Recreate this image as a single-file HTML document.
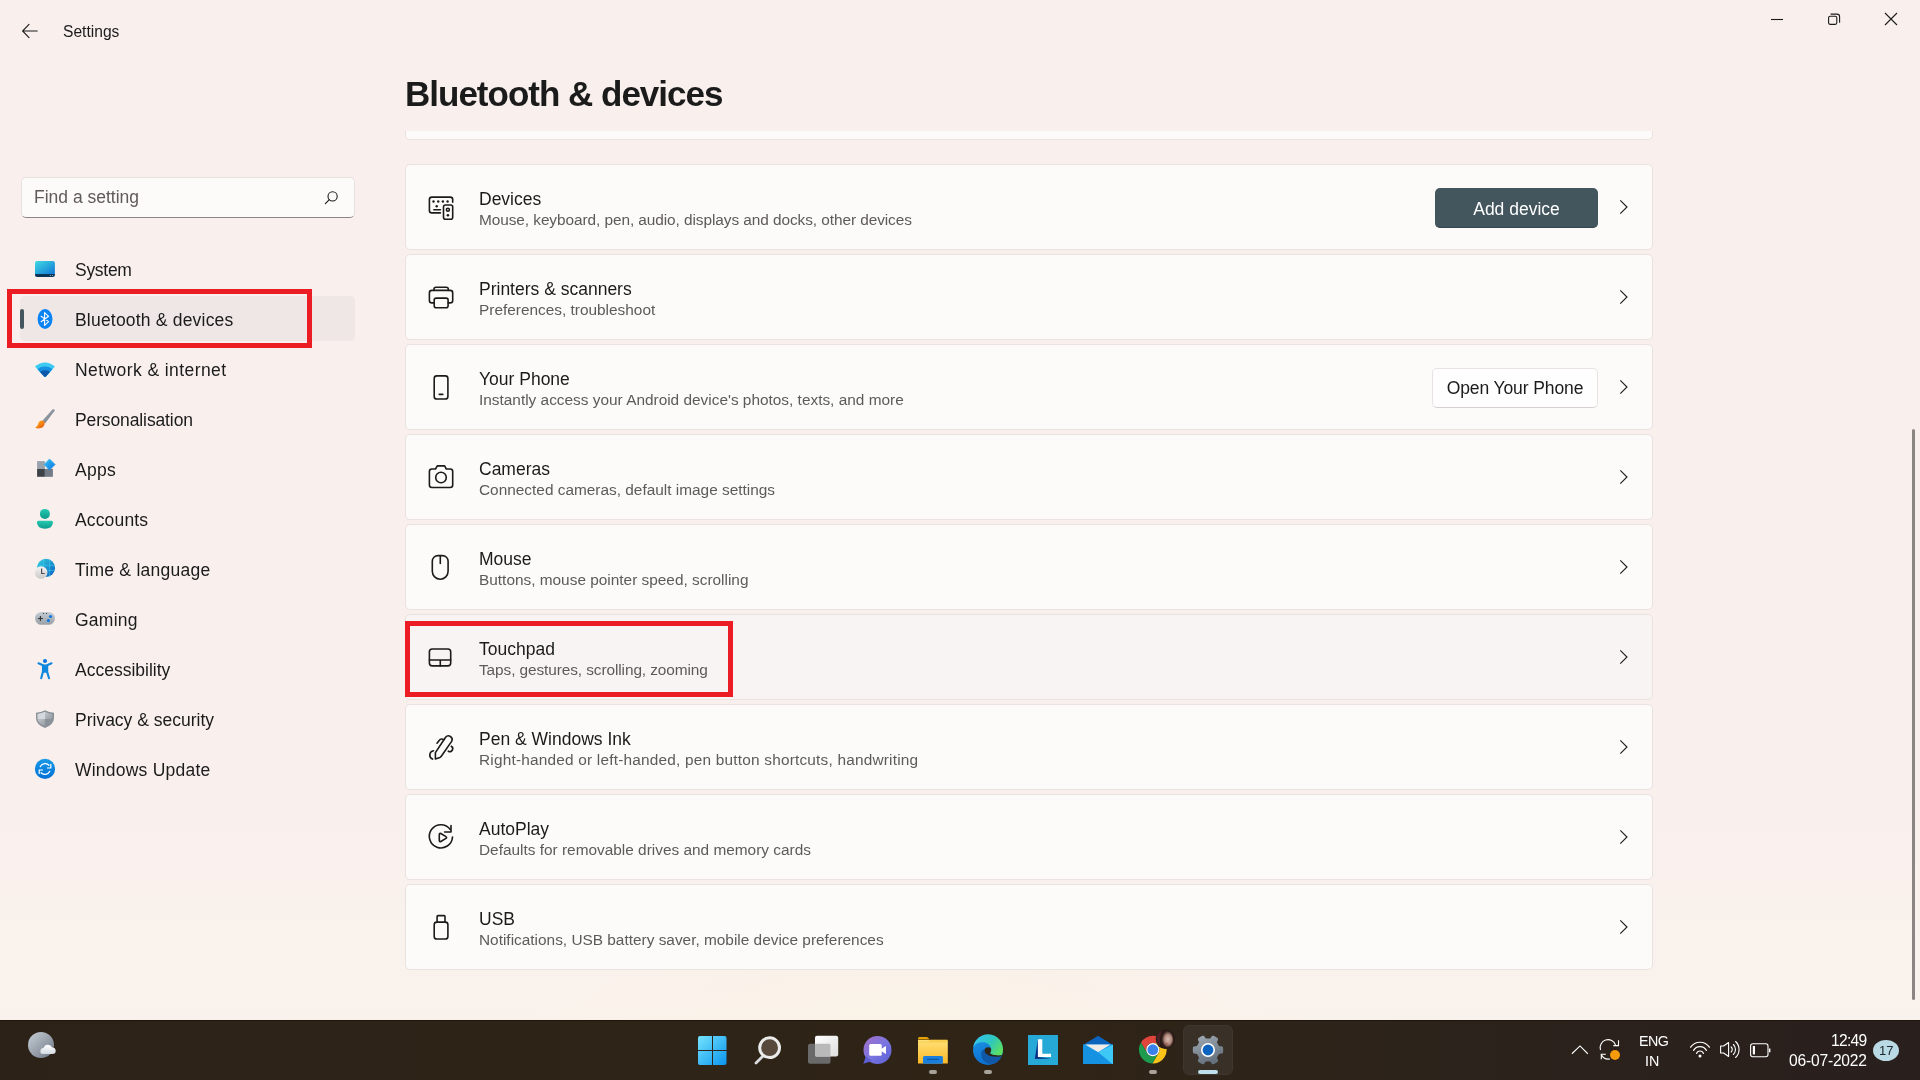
<!DOCTYPE html>
<html><head><meta charset="utf-8">
<style>
*{margin:0;padding:0;box-sizing:border-box}
.t,.card .ti,.card .su,.btnp,.btns{will-change:transform}
html,body{width:1920px;height:1080px;overflow:hidden}
body{background:radial-gradient(ellipse 420px 160px at 900px 1030px,rgba(250,243,228,0.6),rgba(250,243,228,0) 100%),linear-gradient(180deg,#f9f0ee 0px,#f9f0ed 800px,#f9f2ec 1020px);font-family:"Liberation Sans",sans-serif;color:#1b1b1b;position:relative}
.a{position:absolute}
.t{position:absolute;white-space:nowrap;line-height:1}
.nav{font-size:17.5px;left:75px;color:#1b1b1b}
.card{position:absolute;left:405px;width:1248px;height:86px;background:#fcfbf9;border:1px solid #eae2e0;border-radius:5px}
.card .ti{position:absolute;left:73px;top:25.6px;font-size:17.5px;line-height:1;white-space:nowrap;color:#1b1b1b}
.card .su{position:absolute;left:73px;top:47.2px;font-size:15.4px;line-height:1;white-space:nowrap;color:#5d5b5a}
.card svg.ic{position:absolute;left:14px;top:20px;width:40px;height:45px}
.card svg.ch{position:absolute;left:1205px;top:34px;width:20px;height:20px}
.ic *{fill:none;stroke:#1b1b1b;stroke-width:1.6;stroke-linecap:round;stroke-linejoin:round}
.ic .f{fill:#1b1b1b;stroke:none}
.nv{position:absolute;left:28px;width:35px;height:35px}
.btnp{position:absolute;left:1029px;top:23px;width:163px;height:40px;background:#44565d;border-bottom:1px solid #34444a;border-radius:5px;color:#fff;font-size:17.5px;line-height:42.5px;text-align:center}
.btns{position:absolute;left:1026px;top:23px;width:166px;height:40px;background:#fefefe;border:1px solid #e8e3e2;border-bottom-color:#d5d0cf;border-radius:5px;color:#1b1b1b;font-size:17.5px;line-height:39.5px;text-align:center;letter-spacing:-0.1px}
</style></head>
<body>
<!-- title bar -->
<svg class="a" style="left:20px;top:22px" width="20" height="18" viewBox="0 0 20 18"><path d="M9 2.3 L2.6 9 L9 15.7 M2.8 9 H17.2" fill="none" stroke="#1b1b1b" stroke-width="1.1" stroke-linecap="round"/></svg>
<div class="t" style="left:62.5px;top:24px;font-size:15.6px">Settings</div>

<svg class="a" style="left:1765px;top:10px" width="24" height="20"><path d="M6 9.5 H18" stroke="#1b1b1b" stroke-width="1.1"/></svg>
<svg class="a" style="left:1822px;top:8.5px" width="24" height="22" viewBox="0 0 24 22"><rect x="6.6" y="7.2" width="8.2" height="8.2" rx="1.6" fill="none" stroke="#1b1b1b" stroke-width="1.1"/><path d="M8.6 5.1 H15 a2.6 2.6 0 0 1 2.6 2.6 V13.7" fill="none" stroke="#1b1b1b" stroke-width="1.1"/></svg>
<svg class="a" style="left:1878px;top:6px" width="26" height="26" viewBox="0 0 26 26"><path d="M7 7 L19 19 M19 7 L7 19" stroke="#1b1b1b" stroke-width="1.1"/></svg>

<!-- page title -->
<div class="t" style="left:405px;top:76px;font-size:35px;font-weight:bold;letter-spacing:-1.0px">Bluetooth &amp; devices</div>

<!-- search -->
<div class="a" style="left:21px;top:177px;width:334px;height:41px;background:#fcfbf9;border:1px solid #e6e0de;border-bottom:1px solid #8b8685;border-radius:5px"></div>
<div class="t" style="left:34px;top:189px;font-size:17.5px;color:#5f5b5a">Find a setting</div>
<svg class="a" style="left:322px;top:188px" width="20" height="20" viewBox="0 0 20 20"><circle cx="10.6" cy="8.4" r="4.6" fill="none" stroke="#1b1b1b" stroke-width="1.1"/><path d="M7.3 11.7 L3.4 15.6" stroke="#1b1b1b" stroke-width="1.2" stroke-linecap="round"/></svg>

<!-- nav selection -->
<div class="a" style="left:20px;top:296px;width:335px;height:45px;background:#efe7e5;border-radius:5px"></div>
<div class="a" style="left:20px;top:309px;width:4px;height:20px;background:#45575e;border-radius:2px"></div>

<div id="navtext">
<div class="t nav" style="top:262px;letter-spacing:-0.28px">System</div>
<div class="t nav" style="top:312px;letter-spacing:0.2px">Bluetooth &amp; devices</div>
<div class="t nav" style="top:362px;letter-spacing:0.42px">Network &amp; internet</div>
<div class="t nav" style="top:412px;letter-spacing:-0.12px">Personalisation</div>
<div class="t nav" style="top:462px;letter-spacing:0.3px">Apps</div>
<div class="t nav" style="top:512px;letter-spacing:0.15px">Accounts</div>
<div class="t nav" style="top:562px;letter-spacing:0.25px">Time &amp; language</div>
<div class="t nav" style="top:612px;letter-spacing:0.25px">Gaming</div>
<div class="t nav" style="top:662px">Accessibility</div>
<div class="t nav" style="top:712px">Privacy &amp; security</div>
<div class="t nav" style="top:762px;letter-spacing:0.23px">Windows Update</div>
</div>

<svg class="nv" style="top:252px" viewBox="0 0 35 35">
<defs><linearGradient id="gsys" x1="0" y1="0" x2="1" y2="1"><stop offset="0" stop-color="#3fdbe3"/><stop offset="1" stop-color="#1377d6"/></linearGradient></defs>
<path d="M7 11 a2 2 0 0 1 2 -2 H24.9 a2 2 0 0 1 2 2 V22 H7 Z" fill="url(#gsys)"/>
<path d="M7 22 H26.9 V23 a2 2 0 0 1 -2 2 H9 a2 2 0 0 1 -2 -2 Z" fill="#0b3557"/>
<circle cx="22.4" cy="23.5" r="0.6" fill="#9bb"/><circle cx="24.5" cy="23.5" r="0.6" fill="#9bb"/>
</svg>
<svg class="nv" style="top:302px" viewBox="0 0 35 35">
<ellipse cx="17.05" cy="16.95" rx="7.45" ry="9.95" fill="#0a84f5"/>
<path d="M13.1 14.3 L20.6 19.6 L16.6 23.3 V10.6 L20.6 14.3 L13.1 19.7" fill="none" stroke="#fff" stroke-width="1.1" stroke-linejoin="round" stroke-linecap="round"/>
</svg>
<svg class="nv" style="top:352px" viewBox="0 0 35 35">
<defs><clipPath id="cw"><path d="M7 14.5 Q17 6.5 26.9 14.5 L17.9 24.6 Q17 25.4 16.1 24.6 Z"/></clipPath></defs>
<g clip-path="url(#cw)"><rect x="0" y="0" width="35" height="35" fill="#3cc9f2"/><circle cx="17" cy="26" r="11.6" fill="#1590e0"/><circle cx="17" cy="26" r="7.8" fill="#0b58aa"/></g>
</svg>
<svg class="nv" style="top:402px" viewBox="0 0 35 35">
<defs><linearGradient id="gbr" x1="0" y1="0" x2="1" y2="1"><stop offset="0" stop-color="#b3bcc6"/><stop offset="1" stop-color="#5e6a75"/></linearGradient>
<linearGradient id="gbo" x1="0" y1="0" x2="1" y2="1"><stop offset="0" stop-color="#ffc21a"/><stop offset="1" stop-color="#e64a0e"/></linearGradient></defs>
<path d="M24.4 7.6 Q26.5 6.4 26.8 8.4 L17.2 21.3 L13.9 19.2 Z" fill="url(#gbr)"/>
<path d="M12.6 18.8 Q15.4 17.8 16.8 20.8 Q16.6 26.4 10.2 26.6 Q8.2 26.6 7.2 25.6 Q9.8 24.6 10.2 21.8 Q10.6 19.4 12.6 18.8 Z" fill="url(#gbo)"/>
</svg>
<svg class="nv" style="top:452px" viewBox="0 0 35 35">
<defs><linearGradient id="gap" x1="0" y1="0" x2="1" y2="1"><stop offset="0" stop-color="#35c5f5"/><stop offset="1" stop-color="#0a72e0"/></linearGradient></defs>
<rect x="9.1" y="9.1" width="7.8" height="7.8" fill="#9aa2ab"/>
<rect x="9.1" y="16.9" width="7.8" height="7.9" fill="#3d4247"/>
<rect x="16.9" y="16.9" width="8" height="7.9" fill="#737b84"/>
<path d="M21.5 7 L27 12.5 L21.5 18 L16.2 12.5 Z" fill="url(#gap)" stroke="url(#gap)" stroke-width="0.8" stroke-linejoin="round"/>
</svg>
<svg class="nv" style="top:502px" viewBox="0 0 35 35">
<defs><linearGradient id="gac" x1="0" y1="0" x2="0" y2="1"><stop offset="0" stop-color="#27c9b3"/><stop offset="1" stop-color="#0b9c8a"/></linearGradient></defs>
<circle cx="16.9" cy="11.9" r="5" fill="url(#gac)"/>
<path d="M10.4 18.8 H23.5 Q25 18.8 25 20.6 Q24.4 26.8 17 26.8 Q9.6 26.8 8.9 20.6 Q8.9 18.8 10.4 18.8 Z" fill="url(#gac)"/>
</svg>
<svg class="nv" style="top:552px" viewBox="0 0 35 35">
<defs><linearGradient id="ggl" x1="0" y1="0" x2="1" y2="1"><stop offset="0" stop-color="#35d0e0"/><stop offset="1" stop-color="#0a5cc0"/></linearGradient>
<linearGradient id="gcl" x1="0" y1="0" x2="0" y2="1"><stop offset="0" stop-color="#f5f5f5"/><stop offset="1" stop-color="#c8c8c8"/></linearGradient></defs>
<circle cx="18" cy="15.9" r="9.1" fill="url(#ggl)"/>
<path d="M9 13.4 H27 M9 18.4 H27 M15.5 7 V25 M21.5 7 V25" stroke="#3fd4ef" stroke-width="0.7" opacity="0.7"/>
<circle cx="13.1" cy="20.5" r="6.3" fill="url(#gcl)"/>
<path d="M13.6 16.4 V21.5 H16.8" fill="none" stroke="#505050" stroke-width="1.2"/>
</svg>
<svg class="nv" style="top:602px" viewBox="0 0 35 35">
<defs><linearGradient id="ggm" x1="0" y1="0" x2="0" y2="1"><stop offset="0" stop-color="#c6ccd3"/><stop offset="1" stop-color="#98a0a8"/></linearGradient></defs>
<rect x="7" y="10" width="19.9" height="12.8" rx="6.4" fill="url(#ggm)"/>
<path d="M12.4 14 V19 M9.9 16.5 H14.9" stroke="#333" stroke-width="1.1"/>
<circle cx="22.5" cy="14.5" r="1.6" fill="#0a78e0"/><circle cx="20.4" cy="18.5" r="1.6" fill="#0a78e0"/>
<circle cx="15.5" cy="11.5" r="0.6" fill="#333"/><circle cx="18.5" cy="11.5" r="0.6" fill="#333"/>
</svg>
<svg class="nv" style="top:652px" viewBox="0 0 35 35">
<circle cx="17" cy="9" r="2.1" fill="#0a78dd"/>
<path d="M10.5 11.3 L15 13.2 V19.6 L13.2 26.3 M23.5 11.3 L19.1 13.2 V19.6 L21 26.3" fill="none" stroke="#1088de" stroke-width="2.1" stroke-linecap="round" stroke-linejoin="round"/>
<rect x="14" y="12.6" width="6.1" height="8.2" rx="1" fill="#1088de"/>
</svg>
<svg class="nv" style="top:702px" viewBox="0 0 35 35">
<defs><linearGradient id="gsh" x1="0" y1="0" x2="1" y2="1"><stop offset="0" stop-color="#d6dadf"/><stop offset="1" stop-color="#80878f"/></linearGradient></defs>
<path d="M17 8.2 Q21 10.4 26 10.7 V16 Q26 22.6 17 25.9 Q8 22.6 8 16 V10.7 Q13 10.4 17 8.2 Z" fill="#8a9097"/>
<path d="M17 9.8 Q20.6 11.8 24.4 12 V16 Q24.4 21.4 17 24 Q9.6 21.4 9.6 16 V12 Q13.4 11.8 17 9.8 Z" fill="url(#gsh)"/>
<path d="M17 9.8 V17 H9.6 V12 Q13.4 11.8 17 9.8 Z" fill="#d4d8dc"/>
<path d="M17 17 H24.4 Q24.4 21.4 17 24 Z" fill="#8a9199"/>
</svg>
<svg class="nv" style="top:752px" viewBox="0 0 35 35">
<defs><linearGradient id="gwu" x1="0" y1="0" x2="0" y2="1"><stop offset="0" stop-color="#1a9ae6"/><stop offset="1" stop-color="#0070d8"/></linearGradient></defs>
<circle cx="17" cy="16.9" r="10.1" fill="url(#gwu)"/>
<path d="M12 15 A5.6 5.6 0 0 1 21.3 13.5 M22 19 A5.6 5.6 0 0 1 12.7 20.5" fill="none" stroke="#fff" stroke-width="1.2"/>
<path d="M22.8 12 V16 H19" fill="none" stroke="#fff" stroke-width="1.2"/>
<path d="M11.2 21.9 V18 H15" fill="none" stroke="#fff" stroke-width="1.2"/>
</svg>


<!-- top partial card -->
<div class="a" style="left:405px;top:131px;width:1248px;height:9px;background:#fcfbf9;border:1px solid #eae2e0;border-top:0;border-radius:0 0 5px 5px"></div>

<div class="card" style="top:164px;"><svg class="ic" viewBox="0 0 40 45"><path d="M32.7 17.3 V14.6 a2.5 2.5 0 0 0 -2.5 -2.5 H11.9 a2.5 2.5 0 0 0 -2.5 2.5 V25.4 a2.5 2.5 0 0 0 2.5 2.5 H20.4"/>
<path d="M13.8 24.8 H20.4"/>
<rect x="23.5" y="20" width="9.2" height="14.2" rx="2"/>
<circle cx="27.9" cy="24.8" r="1.5"/>
<circle class="f" cx="13.5" cy="16.5" r="1.2"/><circle class="f" cx="18.25" cy="16.5" r="1.2"/><circle class="f" cx="22.9" cy="16.5" r="1.2"/><circle class="f" cx="27.6" cy="16.5" r="1.2"/><circle class="f" cx="16.7" cy="21.25" r="1.2"/><circle class="f" cx="27.9" cy="30.2" r="1.3"/></svg><div class="ti">Devices</div><div class="su" style="letter-spacing:-0.07px">Mouse, keyboard, pen, audio, displays and docks, other devices</div><div class="btnp">Add device</div><svg class="ch" viewBox="0 0 20 20"><path d="M9.3 1.3 L16 8 L9.3 14.7" fill="none" stroke="#1b1b1b" stroke-width="1.1"/></svg></div>
<div class="card" style="top:254px;"><svg class="ic" viewBox="0 0 40 45"><path d="M14 15.4 V14.2 a2 2 0 0 1 2 -2 H26.3 a2 2 0 0 1 2 2 V15.4"/>
<path d="M14.2 27.9 H11.9 a2.5 2.5 0 0 1 -2.5 -2.5 V17.9 a2.5 2.5 0 0 1 2.5 -2.5 H30.2 a2.5 2.5 0 0 1 2.5 2.5 V25.4 a2.5 2.5 0 0 1 -2.5 2.5 H28.1"/>
<rect x="14.2" y="23.1" width="13.9" height="9.6" rx="2"/></svg><div class="ti">Printers &amp; scanners</div><div class="su">Preferences, troubleshoot</div><svg class="ch" viewBox="0 0 20 20"><path d="M9.3 1.3 L16 8 L9.3 14.7" fill="none" stroke="#1b1b1b" stroke-width="1.1"/></svg></div>
<div class="card" style="top:344px;"><svg class="ic" viewBox="0 0 40 45"><rect x="14.2" y="10.9" width="13.7" height="23.1" rx="2.6"/>
<path d="M19.3 29.4 H22.8"/></svg><div class="ti">Your Phone</div><div class="su">Instantly access your Android device's photos, texts, and more</div><div class="btns">Open Your Phone</div><svg class="ch" viewBox="0 0 20 20"><path d="M9.3 1.3 L16 8 L9.3 14.7" fill="none" stroke="#1b1b1b" stroke-width="1.1"/></svg></div>
<div class="card" style="top:434px;"><svg class="ic" viewBox="0 0 40 45"><path d="M9.4 16.5 a2.5 2.5 0 0 1 2.5 -2.5 H15.5 L17.3 10.9 H24.6 L26.3 14 H30.2 a2.5 2.5 0 0 1 2.5 2.5 V30 a2.5 2.5 0 0 1 -2.5 2.5 H11.9 a2.5 2.5 0 0 1 -2.5 -2.5 Z"/>
<circle cx="21" cy="22.5" r="5.3"/></svg><div class="ti">Cameras</div><div class="su">Connected cameras, default image settings</div><svg class="ch" viewBox="0 0 20 20"><path d="M9.3 1.3 L16 8 L9.3 14.7" fill="none" stroke="#1b1b1b" stroke-width="1.1"/></svg></div>
<div class="card" style="top:524px;"><svg class="ic" viewBox="0 0 40 45"><path d="M12.3 16.2 a5.6 5.6 0 0 1 5.6 -5.6 H22.5 a5.6 5.6 0 0 1 5.6 5.6 V26.3 a7.9 7.9 0 0 1 -15.8 0 Z"/>
<path d="M20.3 10.8 V18.5"/></svg><div class="ti">Mouse</div><div class="su">Buttons, mouse pointer speed, scrolling</div><svg class="ch" viewBox="0 0 20 20"><path d="M9.3 1.3 L16 8 L9.3 14.7" fill="none" stroke="#1b1b1b" stroke-width="1.1"/></svg></div>
<div class="card" style="top:614px;background:#f8f4f3;"><svg class="ic" viewBox="0 0 40 45"><rect x="9.4" y="14" width="21.3" height="16.9" rx="2.8"/>
<path d="M9.4 25 H30.7 M20.3 25 V30.9"/></svg><div class="ti">Touchpad</div><div class="su" style="letter-spacing:-0.09px">Taps, gestures, scrolling, zooming</div><svg class="ch" viewBox="0 0 20 20"><path d="M9.3 1.3 L16 8 L9.3 14.7" fill="none" stroke="#1b1b1b" stroke-width="1.1"/></svg></div>
<div class="card" style="top:704px;"><svg class="ic" viewBox="0 0 40 45"><path d="M15.4 34 V27.6 L25.6 12.2 a3.7 3.7 0 0 1 6.2 3.9 L21.3 31.3 a3 3 0 0 1 -1.4 1.1 Z"/>
<path d="M17 18.2 L19.4 15.2 a2.7 2.7 0 0 1 4.3 -0.3"/>
<path d="M13.5 25.7 a4.4 4.4 0 0 0 -1 8.4"/>
<path d="M31.3 21.3 a2.6 2.6 0 0 1 -3 4.9"/></svg><div class="ti">Pen &amp; Windows Ink</div><div class="su" style="letter-spacing:0.2px">Right-handed or left-handed, pen button shortcuts, handwriting</div><svg class="ch" viewBox="0 0 20 20"><path d="M9.3 1.3 L16 8 L9.3 14.7" fill="none" stroke="#1b1b1b" stroke-width="1.1"/></svg></div>
<div class="card" style="top:794px;"><svg class="ic" viewBox="0 0 40 45"><path d="M32.5 22 A11.6 11.6 0 1 1 30.3 14.5"/>
<path d="M31 10.6 V17 H24.6"/>
<path d="M19.3 19.4 a1 1 0 0 1 1.5 -0.9 L26 21.6 a1 1 0 0 1 0 1.8 L20.8 26.5 a1 1 0 0 1 -1.5 -0.9 Z"/></svg><div class="ti">AutoPlay</div><div class="su">Defaults for removable drives and memory cards</div><svg class="ch" viewBox="0 0 20 20"><path d="M9.3 1.3 L16 8 L9.3 14.7" fill="none" stroke="#1b1b1b" stroke-width="1.1"/></svg></div>
<div class="card" style="top:884px;"><svg class="ic" viewBox="0 0 40 45"><path d="M17.1 17.1 V11.4 a0.8 0.8 0 0 1 0.8 -0.8 H24.2 a0.8 0.8 0 0 1 0.8 0.8 V17.1"/>
<rect x="14.2" y="17.1" width="13.7" height="16.9" rx="2.6"/></svg><div class="ti">USB</div><div class="su">Notifications, USB battery saver, mobile device preferences</div><svg class="ch" viewBox="0 0 20 20"><path d="M9.3 1.3 L16 8 L9.3 14.7" fill="none" stroke="#1b1b1b" stroke-width="1.1"/></svg></div>

<!-- red boxes -->
<div class="a" style="left:7px;top:289px;width:305px;height:59px;border:5px solid #ec1c24"></div>
<div class="a" style="left:405px;top:621px;width:328px;height:76px;border:5px solid #ec1c24"></div>

<!-- scrollbar -->
<div class="a" style="left:1912px;top:429px;width:3px;height:571px;background:#8a8483;border-radius:2px"></div>

<div class="a" style="left:0;top:1020px;width:1920px;height:60px;background:linear-gradient(90deg,#2d2218 0%,#2e2417 35%,#2f2416 55%,#2b221c 80%,#29201e 100%);border-top:1px solid #1f160b"></div>
<!-- weather -->
<svg class="a" style="left:20px;top:1025px" width="45" height="40" viewBox="0 0 45 40">
<defs><linearGradient id="gwe" x1="0" y1="0" x2="1" y2="1"><stop offset="0" stop-color="#c9d0d8"/><stop offset="1" stop-color="#6c7683"/></linearGradient>
<linearGradient id="gcd" x1="0" y1="0" x2="0" y2="1"><stop offset="0" stop-color="#ffffff"/><stop offset="1" stop-color="#d5dbe2"/></linearGradient></defs>
<circle cx="21" cy="20" r="13" fill="url(#gwe)"/>
<path d="M22 29 a3.2 3.2 0 0 1 1.5 -6 a4.6 4.6 0 0 1 8.6 -0.6 a3.3 3.3 0 0 1 3.6 3.4 a3.2 3.2 0 0 1 -3.2 3.2 Z" fill="url(#gcd)"/>
</svg>
<!-- start -->
<svg class="a" style="left:697px;top:1035px" width="31" height="31" viewBox="0 0 31 31">
<defs><linearGradient id="gst" x1="0" y1="0" x2="1" y2="1"><stop offset="0" stop-color="#74e3fc"/><stop offset="1" stop-color="#0b95f0"/></linearGradient></defs>
<path d="M1 3 a2 2 0 0 1 2 -2 H15 V15 H1 Z M16 1 H27.5 a2 2 0 0 1 2 2 V15 H16 Z M1 16 H15 V30 H3 a2 2 0 0 1 -2 -2 Z M16 16 H29.5 V28 a2 2 0 0 1 -2 2 H16 Z" fill="url(#gst)"/>
</svg>
<!-- search -->
<svg class="a" style="left:752px;top:1034px" width="32" height="32" viewBox="0 0 32 32">
<path d="M4 29 L10.5 22.5" stroke="#dcdde0" stroke-width="2.8" stroke-linecap="round"/>
<circle cx="17.6" cy="13.7" r="9.9" fill="#574a3d" stroke="#ebebeb" stroke-width="3"/>
</svg>
<!-- task view -->
<svg class="a" style="left:806px;top:1034px" width="34" height="32" viewBox="0 0 34 32">
<defs><linearGradient id="gtv" x1="0" y1="0" x2="1" y2="1"><stop offset="0" stop-color="#ffffff"/><stop offset="1" stop-color="#dedede"/></linearGradient></defs>
<rect x="2" y="9.75" width="22.5" height="20" rx="2" fill="#6a6a6a"/>
<rect x="9" y="1.8" width="23.2" height="20.7" rx="2" fill="url(#gtv)"/>
<rect x="9" y="9.75" width="15.5" height="12.75" rx="1" fill="#b9b9b9"/>
</svg>
<!-- teams -->
<svg class="a" style="left:860px;top:1034px" width="34" height="34" viewBox="0 0 34 34">
<defs><linearGradient id="gtm" x1="0" y1="0" x2="1" y2="1"><stop offset="0" stop-color="#a56fc8"/><stop offset="0.5" stop-color="#7b75e0"/><stop offset="1" stop-color="#5a60d6"/></linearGradient></defs>
<circle cx="17.5" cy="16" r="14" fill="url(#gtm)"/>
<path d="M6 22 L3.3 29.8 L12 27 Z" fill="#5f5fd4"/>
<rect x="9.2" y="10" width="12.5" height="11.8" rx="1.5" fill="#fff"/>
<path d="M21 15 L26 12 V20 L21 17 Z" fill="#fff"/>
</svg>
<!-- explorer -->
<svg class="a" style="left:916px;top:1035px" width="34" height="32" viewBox="0 0 34 32">
<defs><linearGradient id="gfo" x1="0" y1="0" x2="0" y2="1"><stop offset="0" stop-color="#ffe17a"/><stop offset="1" stop-color="#fbb925"/></linearGradient></defs>
<path d="M2 3.5 a1.5 1.5 0 0 1 1.5 -1.5 H11 L14 4.6 H2 Z" fill="#e7a20a"/>
<path d="M2 5 H30.5 a1.3 1.3 0 0 1 1.3 1.3 V28.5 H2 Z" fill="url(#gfo)"/>
<path d="M2 6.5 H12 L14.5 4.5 H30.5 a1.3 1.3 0 0 1 1.3 1.3 V7.5 H2 Z" fill="#f7c53a" opacity="0.6"/>
<path d="M7 28.8 V22.4 a1.5 1.5 0 0 1 1.5 -1.5 H25.4 a1.5 1.5 0 0 1 1.5 1.5 V28.8 Z" fill="#1a7fdc"/>
<path d="M11 24.3 H22.8" stroke="#0c4f9c" stroke-width="1"/>
</svg>
<div class="a" style="left:929px;top:1070px;width:8px;height:4px;border-radius:2px;background:#a8a29b"></div>
<!-- edge -->
<svg class="a" style="left:968px;top:1030px" width="40" height="40" viewBox="0 0 40 40">
<defs><linearGradient id="ged1" x1="0" y1="0.2" x2="1" y2="0.7"><stop offset="0" stop-color="#33c3f2"/><stop offset="0.55" stop-color="#2fc7bd"/><stop offset="1" stop-color="#5de05e"/></linearGradient>
<linearGradient id="ged2" x1="0" y1="0" x2="0.3" y2="1"><stop offset="0" stop-color="#1c97e6"/><stop offset="1" stop-color="#0d6fd0"/></linearGradient></defs>
<circle cx="20" cy="20" r="15" fill="url(#ged2)"/>
<path d="M16.6 19.5 C14 19.5 12.8 22 13.2 25 C14 30 18 34 23.5 33.8 C28 33.6 31.6 30.5 33.3 26.4 C25 27.6 20 26.2 18 23 C17.2 21.6 16.8 20.5 16.6 19.5 Z" fill="#1158a8"/>
<circle cx="20" cy="20.6" r="3.4" fill="#2e2417"/>
<path d="M17.2 22.5 C19.5 26.2 25 27.4 33.4 26.4 L33.9 24.9 C30 25.6 25 25.4 22.2 23.3 Z" fill="#2e2417"/>
<path d="M5.1 17.6 C7.3 13.4 11.3 12.2 14.6 12.2 C18.5 12.2 21.8 14.3 22.9 17.2 C23.7 19.5 23.2 21.6 22.2 23.3 C24.2 25.1 28 25.5 33.9 24.9 A15 15 0 1 0 5.1 17.6 Z" fill="url(#ged1)"/>
</svg>
<div class="a" style="left:984px;top:1070px;width:8px;height:4px;border-radius:2px;background:#a8a29b"></div>
<!-- L app -->
<svg class="a" style="left:1028px;top:1035px" width="30" height="30" viewBox="0 0 30 30">
<rect x="0" y="0" width="30" height="30" fill="#27a9d8"/>
<path d="M9.9 4.3 L6.8 24 L23 23.6 L10 22 Z" fill="#0a2f86"/>
<path d="M9.9 4.3 H14.3 V18.8 H23 V22 H9.9 Z" fill="#fff"/>
</svg>
<!-- mail -->
<svg class="a" style="left:1082px;top:1034px" width="32" height="32" viewBox="0 0 32 32">
<defs><linearGradient id="gml" x1="0" y1="0" x2="1" y2="1"><stop offset="0" stop-color="#24a8ee"/><stop offset="1" stop-color="#1485e0"/></linearGradient></defs>
<path d="M1 11 L16 1.8 L31 11 Z" fill="#0b63bd"/>
<rect x="1" y="10.6" width="30" height="19.4" rx="1" fill="url(#gml)"/>
<path d="M3.5 10.6 H28.5 L16 18.3 Z" fill="#f0ebe6"/>
<path d="M16 18.3 L31 10.6 V30 H30 Z" fill="#3ec8f6"/>
<path d="M1 10.6 L16 18.3 L30 30 H2 a1 1 0 0 1 -1 -1 Z" fill="#1692e2"/>
</svg>
<!-- chrome -->
<svg class="a" style="left:1136px;top:1026px" width="42" height="42" viewBox="0 0 42 42">
<defs><clipPath id="cav"><circle cx="29.6" cy="13.1" r="9.3"/></clipPath></defs>
<path d="M16.80 17.10 L29.03 17.10 A13.9 13.9 0 0 0 4.97 16.41 L11.08 27.00 A6.6 6.6 0 0 1 16.80 17.10Z" fill="#e0443a"/>
<path d="M22.52 27.00 L16.40 37.59 A13.9 13.9 0 0 0 29.03 17.10 L16.80 17.10 A6.6 6.6 0 0 1 22.52 27.00Z" fill="#fcc419"/>
<path d="M11.08 27.00 L4.97 16.41 A13.9 13.9 0 0 0 16.40 37.59 L22.52 27.00 A6.6 6.6 0 0 1 11.08 27.00Z" fill="#1f9b4d"/>
<circle cx="16.8" cy="23.7" r="6.6" fill="#fff"/>
<circle cx="16.8" cy="23.7" r="5.4" fill="#3a82ea"/>
<circle cx="29.6" cy="13.1" r="10" fill="#2b211b"/>
<defs><radialGradient id="gface" cx="0.58" cy="0.5" r="0.5"><stop offset="0" stop-color="#d9bcb2"/><stop offset="0.55" stop-color="#b38d80"/><stop offset="1" stop-color="#2e1c19"/></radialGradient></defs>
<g clip-path="url(#cav)">
<rect x="18" y="2" width="24" height="24" fill="#2a1a17"/>
<ellipse cx="31" cy="13.4" rx="6.2" ry="8.4" fill="url(#gface)"/>
<ellipse cx="30.2" cy="17.6" rx="1.8" ry="0.9" fill="#a85a55" opacity="0.8"/>
<path d="M21 7 Q23 3.5 26 4 Q23.5 10 24 23 L20 23 Z" fill="#4a2428" opacity="0.9"/>
</g>
</svg>
<div class="a" style="left:1149px;top:1070px;width:8px;height:4px;border-radius:2px;background:#a8a29b"></div>
<!-- settings active -->
<div class="a" style="left:1183px;top:1025px;width:50px;height:50px;border-radius:6px;background:#393027;border:1px solid #3f362e"></div>
<svg class="a" style="left:1190px;top:1032px" width="36" height="36" viewBox="0 0 36 36">
<defs><linearGradient id="ggr" x1="0" y1="0" x2="0.4" y2="1"><stop offset="0" stop-color="#a3acb6"/><stop offset="1" stop-color="#65717d"/></linearGradient></defs>
<path d="M33.20 18.00 L33.20 18.27 L33.19 18.53 L33.18 18.80 L33.16 19.06 L33.14 19.32 L33.12 19.59 L33.09 19.85 L33.05 20.12 L33.01 20.38 L32.97 20.64 L32.92 20.90 L32.78 21.14 L32.48 21.34 L32.03 21.50 L31.48 21.61 L30.88 21.69 L30.28 21.76 L29.74 21.81 L29.29 21.89 L28.98 22.00 L28.83 22.16 L28.76 22.35 L28.68 22.53 L28.60 22.72 L28.51 22.90 L28.43 23.09 L28.34 23.27 L28.24 23.45 L28.15 23.62 L28.05 23.80 L27.94 23.97 L27.84 24.15 L27.73 24.32 L27.62 24.49 L27.50 24.65 L27.38 24.82 L27.26 24.98 L27.14 25.14 L27.01 25.30 L26.95 25.51 L27.01 25.84 L27.17 26.26 L27.39 26.76 L27.64 27.31 L27.87 27.87 L28.04 28.40 L28.13 28.87 L28.11 29.23 L27.97 29.47 L27.77 29.64 L27.57 29.81 L27.36 29.98 L27.15 30.14 L26.93 30.30 L26.72 30.45 L26.50 30.60 L26.28 30.75 L26.05 30.89 L25.83 31.03 L25.60 31.16 L25.37 31.29 L25.14 31.42 L24.90 31.54 L24.66 31.66 L24.42 31.78 L24.18 31.89 L23.94 31.99 L23.69 32.09 L23.45 32.19 L23.20 32.28 L22.95 32.37 L22.67 32.37 L22.34 32.21 L21.99 31.90 L21.61 31.48 L21.24 31.00 L20.89 30.51 L20.57 30.07 L20.28 29.72 L20.03 29.51 L19.81 29.46 L19.61 29.49 L19.41 29.51 L19.21 29.54 L19.01 29.56 L18.81 29.57 L18.61 29.58 L18.40 29.59 L18.20 29.60 L18.00 29.60 L17.80 29.60 L17.60 29.59 L17.39 29.58 L17.19 29.57 L16.99 29.56 L16.79 29.54 L16.59 29.51 L16.39 29.49 L16.19 29.46 L15.97 29.51 L15.72 29.72 L15.43 30.07 L15.11 30.51 L14.76 31.00 L14.39 31.48 L14.01 31.90 L13.66 32.21 L13.33 32.37 L13.05 32.37 L12.80 32.28 L12.55 32.19 L12.31 32.09 L12.06 31.99 L11.82 31.89 L11.58 31.78 L11.34 31.66 L11.10 31.54 L10.86 31.42 L10.63 31.29 L10.40 31.16 L10.17 31.03 L9.95 30.89 L9.72 30.75 L9.50 30.60 L9.28 30.45 L9.07 30.30 L8.85 30.14 L8.64 29.98 L8.43 29.81 L8.23 29.64 L8.03 29.47 L7.89 29.23 L7.87 28.87 L7.96 28.40 L8.13 27.87 L8.36 27.31 L8.61 26.76 L8.83 26.26 L8.99 25.84 L9.05 25.51 L8.99 25.30 L8.86 25.14 L8.74 24.98 L8.62 24.82 L8.50 24.65 L8.38 24.49 L8.27 24.32 L8.16 24.15 L8.06 23.97 L7.95 23.80 L7.85 23.62 L7.76 23.45 L7.66 23.27 L7.57 23.09 L7.49 22.90 L7.40 22.72 L7.32 22.53 L7.24 22.35 L7.17 22.16 L7.02 22.00 L6.71 21.89 L6.26 21.81 L5.72 21.76 L5.12 21.69 L4.52 21.61 L3.97 21.50 L3.52 21.34 L3.22 21.14 L3.08 20.90 L3.03 20.64 L2.99 20.38 L2.95 20.12 L2.91 19.85 L2.88 19.59 L2.86 19.32 L2.84 19.06 L2.82 18.80 L2.81 18.53 L2.80 18.27 L2.80 18.00 L2.80 17.73 L2.81 17.47 L2.82 17.20 L2.84 16.94 L2.86 16.68 L2.88 16.41 L2.91 16.15 L2.95 15.88 L2.99 15.62 L3.03 15.36 L3.08 15.10 L3.22 14.86 L3.52 14.66 L3.97 14.50 L4.52 14.39 L5.12 14.31 L5.72 14.24 L6.26 14.19 L6.71 14.11 L7.02 14.00 L7.17 13.84 L7.24 13.65 L7.32 13.47 L7.40 13.28 L7.49 13.10 L7.57 12.91 L7.66 12.73 L7.76 12.55 L7.85 12.38 L7.95 12.20 L8.06 12.03 L8.16 11.85 L8.27 11.68 L8.38 11.51 L8.50 11.35 L8.62 11.18 L8.74 11.02 L8.86 10.86 L8.99 10.70 L9.05 10.49 L8.99 10.16 L8.83 9.74 L8.61 9.24 L8.36 8.69 L8.13 8.13 L7.96 7.60 L7.87 7.13 L7.89 6.77 L8.03 6.53 L8.23 6.36 L8.43 6.19 L8.64 6.02 L8.85 5.86 L9.07 5.70 L9.28 5.55 L9.50 5.40 L9.72 5.25 L9.95 5.11 L10.17 4.97 L10.40 4.84 L10.63 4.71 L10.86 4.58 L11.10 4.46 L11.34 4.34 L11.58 4.22 L11.82 4.11 L12.06 4.01 L12.31 3.91 L12.55 3.81 L12.80 3.72 L13.05 3.63 L13.33 3.63 L13.66 3.79 L14.01 4.10 L14.39 4.52 L14.76 5.00 L15.11 5.49 L15.43 5.93 L15.72 6.28 L15.97 6.49 L16.19 6.54 L16.39 6.51 L16.59 6.49 L16.79 6.46 L16.99 6.44 L17.19 6.43 L17.39 6.42 L17.60 6.41 L17.80 6.40 L18.00 6.40 L18.20 6.40 L18.40 6.41 L18.61 6.42 L18.81 6.43 L19.01 6.44 L19.21 6.46 L19.41 6.49 L19.61 6.51 L19.81 6.54 L20.03 6.49 L20.28 6.28 L20.57 5.93 L20.89 5.49 L21.24 5.00 L21.61 4.52 L21.99 4.10 L22.34 3.79 L22.67 3.63 L22.95 3.63 L23.20 3.72 L23.45 3.81 L23.69 3.91 L23.94 4.01 L24.18 4.11 L24.42 4.22 L24.66 4.34 L24.90 4.46 L25.14 4.58 L25.37 4.71 L25.60 4.84 L25.83 4.97 L26.05 5.11 L26.28 5.25 L26.50 5.40 L26.72 5.55 L26.93 5.70 L27.15 5.86 L27.36 6.02 L27.57 6.19 L27.77 6.36 L27.97 6.53 L28.11 6.77 L28.13 7.13 L28.04 7.60 L27.87 8.13 L27.64 8.69 L27.39 9.24 L27.17 9.74 L27.01 10.16 L26.95 10.49 L27.01 10.70 L27.14 10.86 L27.26 11.02 L27.38 11.18 L27.50 11.35 L27.62 11.51 L27.73 11.68 L27.84 11.85 L27.94 12.03 L28.05 12.20 L28.15 12.38 L28.24 12.55 L28.34 12.73 L28.43 12.91 L28.51 13.10 L28.60 13.28 L28.68 13.47 L28.76 13.65 L28.83 13.84 L28.98 14.00 L29.29 14.11 L29.74 14.19 L30.28 14.24 L30.88 14.31 L31.48 14.39 L32.03 14.50 L32.48 14.66 L32.78 14.86 L32.92 15.10 L32.97 15.36 L33.01 15.62 L33.05 15.88 L33.09 16.15 L33.12 16.41 L33.14 16.68 L33.16 16.94 L33.18 17.20 L33.19 17.47 L33.20 17.73Z" fill="url(#ggr)"/>
<circle cx="18" cy="18" r="7" fill="#fff"/>
<circle cx="18" cy="18" r="5.4" fill="#0d63c0"/>
</svg>
<div class="a" style="left:1198px;top:1070px;width:20px;height:4px;border-radius:2px;background:#bde0ea"></div>
<!-- tray -->
<svg class="a" style="left:1566px;top:1040px" width="28" height="20" viewBox="0 0 28 20"><path d="M5.9 13.75 L14 5.9 L21.8 13.75" fill="none" stroke="#fff" stroke-width="1.1"/></svg>
<svg class="a" style="left:1596px;top:1036px" width="30" height="28" viewBox="0 0 30 28">
<path d="M4.5 14 A7.6 7.6 0 0 1 19.6 9.2" fill="none" stroke="#fff" stroke-width="1.1"/>
<path d="M22.5 4.3 V9.6 H17.4" fill="none" stroke="#fff" stroke-width="1.1"/>
<path d="M5.3 18.5 A8.2 8.2 0 0 0 14 23" fill="none" stroke="#fff" stroke-width="1.1"/>
<path d="M5.3 23.3 V18.3 H9.8" fill="none" stroke="#fff" stroke-width="1.1"/>
<circle cx="19" cy="19" r="5.6" fill="#231c18"/>
<circle cx="19" cy="19" r="5" fill="#f59a0b"/>
</svg>
<div class="t" style="left:1638.5px;top:1034px;font-size:14.3px;color:#fff;letter-spacing:-0.5px">ENG</div>
<div class="t" style="left:1645px;top:1054px;font-size:14.3px;color:#fff">IN</div>
<svg class="a" style="left:1686px;top:1038px" width="28" height="24" viewBox="0 0 28 24">
<path d="M4.6 9.2 A11.4 11.4 0 0 1 23.4 9.2 M7.6 12.4 A7.4 7.4 0 0 1 20.4 12.4 M10.6 15.4 A3.6 3.6 0 0 1 17.4 15.4" fill="none" stroke="#fff" stroke-width="1.2" stroke-linecap="round"/>
<circle cx="14" cy="18" r="1.5" fill="#fff"/>
</svg>
<svg class="a" style="left:1716px;top:1037px" width="28" height="24" viewBox="0 0 28 24">
<path d="M4.6 9 H7.6 L12.6 5.5 V19.5 L7.6 16 H4.6 Z" fill="none" stroke="#fff" stroke-width="1.1" stroke-linejoin="round"/>
<path d="M15.2 10 a3.5 3.5 0 0 1 0 5 M17.4 7.5 a7 7 0 0 1 0 10 M19.6 4.5 a11 11 0 0 1 0 16" fill="none" stroke="#fff" stroke-width="1.1" stroke-linecap="round"/>
</svg>
<svg class="a" style="left:1746px;top:1037px" width="28" height="24" viewBox="0 0 28 24">
<rect x="4.6" y="6.8" width="17.4" height="12.9" rx="2.2" fill="none" stroke="#fff" stroke-width="1.1"/>
<path d="M23 11.4 H24.4 V15.2 H23 Z" fill="#fff"/>
<rect x="6.8" y="9" width="2.2" height="8.4" fill="#fff"/>
</svg>
<div class="t" style="right:53px;top:1032.5px;font-size:15.6px;color:#fff;text-align:right;letter-spacing:-0.7px">12:49</div>
<div class="t" style="right:53px;top:1052.5px;font-size:15.6px;color:#fff;text-align:right;letter-spacing:-0.2px">06-07-2022</div>
<div class="a" style="left:1873px;top:1040px;width:26px;height:21px;border-radius:50%;background:#b9d9e4"></div>
<div class="t" style="left:1879px;top:1044px;font-size:13px;color:#1d262b">17</div>


</body></html>
